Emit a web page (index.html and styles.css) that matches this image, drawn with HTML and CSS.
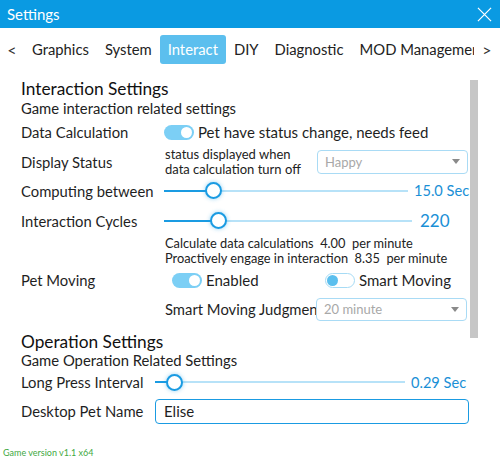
FILE: index.html
```html
<!DOCTYPE html>
<html>
<head>
<meta charset="utf-8">
<link rel="stylesheet" href="styles.css">
</head>
<body>
<div class="window">
  <header class="titlebar">
    <span class="title">Settings</span>
    <svg class="close" width="16" height="16" viewBox="0 0 16 16"><path d="M1 1 L15 15 M15 1 L1 15" stroke="#fff" stroke-width="1.3" fill="none"/></svg>
  </header>
  <nav class="tabs">
    <span class="arrow left">&lt;</span>
    <div class="tablist">
      <span class="tab">Graphics</span>
      <span class="tab">System</span>
      <span class="tab active">Interact</span>
      <span class="tab">DIY</span>
      <span class="tab">Diagnostic</span>
      <span class="tab last">MOD Management</span>
    </div>
    <span class="arrow right">&gt;</span>
  </nav>
  <div class="scroll">
    <div class="content">
      <div class="heading">Interaction Settings</div>
      <div class="subtitle">Game interaction related settings</div>

      <div class="row r30">
        <div class="label">Data Calculation</div>
        <div class="ctrl">
          <span class="toggle on"><span class="knob"></span></span>
          <span class="ttext">Pet have status change, needs feed</span>
        </div>
      </div>

      <div class="row r29">
        <div class="label">Display Status</div>
        <div class="ctrl">
          <div class="note">status displayed when<br>data calculation turn off</div>
          <div class="combo"><span>Happy</span><span class="caret"></span></div>
        </div>
      </div>

      <div class="row r29">
        <div class="label">Computing between</div>
        <div class="ctrl">
          <div class="slider s244"><div class="fill" style="width:49px"></div><div class="thumb" style="left:49px"></div></div>
          <span class="value">15.0 Sec</span>
        </div>
      </div>

      <div class="row r31">
        <div class="label">Interaction Cycles</div>
        <div class="ctrl">
          <div class="slider s248"><div class="fill" style="width:54px"></div><div class="thumb" style="left:54px"></div></div>
          <span class="value big">220</span>
        </div>
      </div>

      <div class="info">
        <div>Calculate data calculations&nbsp; 4.00&nbsp; per minute</div>
        <div>Proactively engage in interaction&nbsp; 8.35&nbsp; per minute</div>
      </div>

      <div class="row r28">
        <div class="label">Pet Moving</div>
        <div class="ctrl">
          <div class="pair first">
            <span class="toggle on"><span class="knob"></span></span>
            <span class="ttext">Enabled</span>
          </div>
          <div class="pair">
            <span class="toggle off"><span class="knob"></span></span>
            <span class="ttext">Smart Moving</span>
          </div>
        </div>
      </div>

      <div class="row r30">
        <div class="label"></div>
        <div class="ctrl">
          <div class="judg">Smart Moving Judgment</div>
          <div class="combo small"><span>20 minute</span><span class="caret"></span></div>
        </div>
      </div>

      <div class="heading h2">Operation Settings</div>
      <div class="subtitle s2">Game Operation Related Settings</div>

      <div class="row r30 narrow">
        <div class="label">Long Press Interval</div>
        <div class="ctrl">
          <div class="slider s250"><div class="fill" style="width:19px"></div><div class="thumb" style="left:19px"></div></div>
          <span class="value">0.29 Sec</span>
        </div>
      </div>

      <div class="row r28 narrow">
        <div class="label">Desktop Pet Name</div>
        <div class="ctrl">
          <div class="textbox">Elise</div>
        </div>
      </div>
    </div>
    <div class="scrollbar"><div class="sthumb"></div></div>
  </div>
  <footer class="footer">Game version v1.1 x64</footer>
</div>
</body>
</html>
```
FILE: styles.css
```css
* { box-sizing: border-box; }
html, body { margin: 0; padding: 0; background: #fff; }
body { font-family: "Lato", "Noto Sans", sans-serif; color: #1f1f1f; }
.window { width: 500px; height: 458px; display: flex; flex-direction: column; overflow: hidden; }

.titlebar { height: 28px; background: #0a9ae2; display: flex; align-items: center; justify-content: space-between; padding: 0 8px 0 7px; }
.title { color: #fff; font-size: 15px; }
.close { width: 15px; height: 15px; margin-right: 0; }

.tabs { height: 42px; display: flex; align-items: center; }
.arrow { font-size: 16px; color: #333; width: 24px; text-align: center; flex: none; }
.arrow.right { width: 26px; }
.tablist { display: flex; align-items: center; overflow: hidden; flex: 1; min-width: 0; white-space: nowrap; }
.tab { font-size: 14.8px; padding: 0 8px; height: 29px; line-height: 29px; border-radius: 3px; color: #222; flex: none; }
.tab.last { flex: 1 1 auto; min-width: 0; overflow: hidden; padding-right: 0; }
.tab.active { background: #5cbfee; color: #fff; }

.scroll { height: 360px; display: flex; overflow: hidden; }
.content { width: 470px; flex: none; padding: 8px 0 0 21px; overflow: hidden; }
.scrollbar { width: 8px; flex: none; }
.sthumb { margin-top: 10px; height: 258px; background: #c6c6c6; }

.heading { font-size: 17.3px; height: 22px; line-height: 22px; color: #111; }
.subtitle { font-size: 14.8px; height: 17px; line-height: 17px; color: #222; }
.h2 { margin-top: 7px; }
.s2 { height: 14px; line-height: 14px; }

.row { display: flex; align-items: center; }
.r28 { height: 28px; } .r29 { height: 29px; } .r30 { height: 30px; } .r31 { height: 31px; }
.label { width: 143px; flex: none; font-size: 14.8px; color: #1f1f1f; white-space: nowrap; }
.narrow .label { width: 134px; }
.ctrl { display: flex; align-items: center; flex: 1; min-width: 0; }

.toggle { width: 30px; height: 15px; border-radius: 8px; position: relative; flex: none; }
.toggle.on { background: #7ccff5; }
.toggle.on .knob { position: absolute; right: 2px; top: 2px; width: 11px; height: 11px; border-radius: 50%; background: #fff; }
.toggle.off { background: #fff; border: 1px solid #a6dbf5; }
.toggle.off .knob { position: absolute; left: 1px; top: 1px; width: 11px; height: 11px; border-radius: 50%; background: #5bbfee; }
.ttext { font-size: 15px; margin-left: 4px; white-space: nowrap; }

.note { width: 153px; flex: none; font-size: 13px; line-height: 15px; padding-left: 1px; color: #222; }
.combo { width: 151px; height: 24px; border: 1px solid #a9dbf5; border-radius: 4px; display: flex; align-items: center; justify-content: space-between; padding: 0 6px 0 7px; font-size: 13px; color: #a8a8a8; }
.combo.small { height: 23px; }
.caret { width: 0; height: 0; border-left: 4px solid transparent; border-right: 4px solid transparent; border-top: 5px solid #8a8a8a; margin-right: 1px; }
.judg { width: 152px; flex: none; overflow: hidden; white-space: nowrap; font-size: 14.8px; padding-left: 1px; }

.slider { position: relative; height: 2px; background: #b7e2f8; flex: none; }
.s244 { width: 244px; } .s248 { width: 248px; } .s250 { width: 250px; }
.fill { position: absolute; left: 0; top: 0; height: 2px; background: #1a9be2; }
.thumb { position: absolute; top: 1px; width: 17px; height: 17px; margin: -8.5px 0 0 -8.5px; border-radius: 50%; background: #fff; border: 2px solid #1a9be2; box-shadow: 0 0 4px rgba(26,155,226,0.45); }
.value { font-size: 14.6px; color: #1a8fd6; margin-left: 6px; white-space: nowrap; }
.value.big { font-size: 17px; margin-left: 8px; }

.info { height: 30px; padding-left: 144px; font-size: 12.8px; line-height: 15px; color: #222; white-space: nowrap; }

.pair { display: flex; align-items: center; }
.pair.first { width: 161px; padding-left: 8px; flex: none; }

.textbox { width: 314px; height: 25px; border: 1px solid #1a9be2; border-radius: 4px; padding-left: 8px; font-size: 15px; line-height: 23px; color: #1f1f1f; }

.footer { flex: 1; font-size: 9px; color: #3fa93f; padding: 17px 0 0 3px; }
```
